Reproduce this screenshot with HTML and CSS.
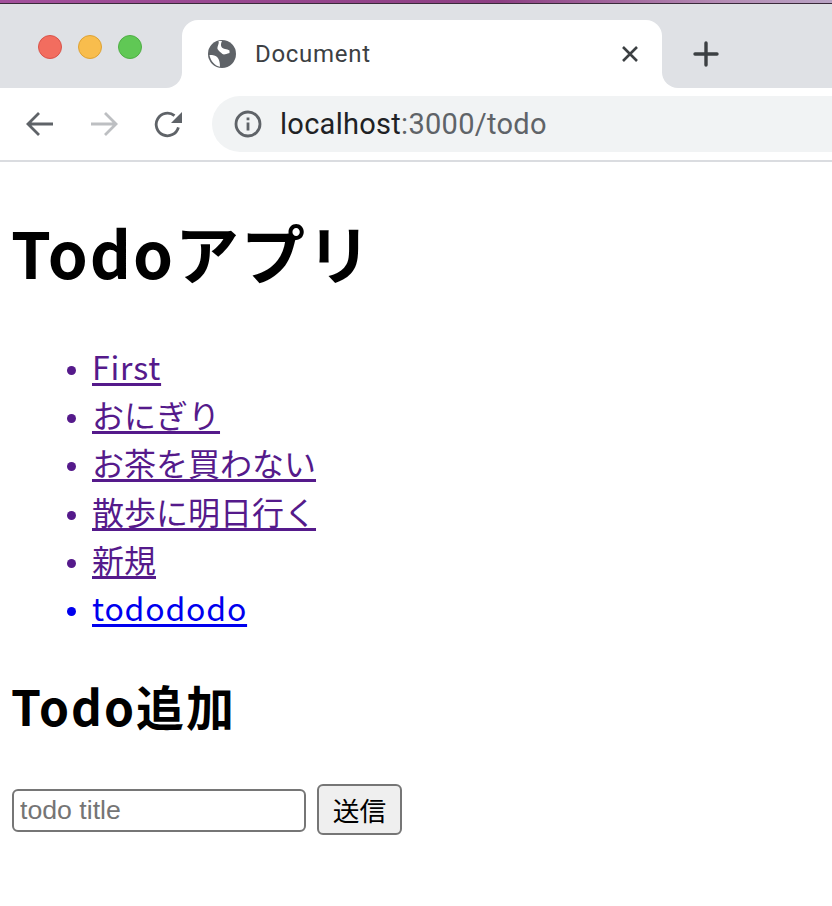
FILE: index.html
```html
<!DOCTYPE html>
<html lang="ja">
<head>
<meta charset="utf-8">
<title>Document</title>
<link rel="stylesheet" href="styles.css">
</head>
<body>
<div class="desktop-strip"></div>
<header class="chrome">
  <div class="tabstrip">
    <div class="strip-left">
      <span class="light red"></span><span class="light yellow"></span><span class="light green"></span>
    </div>
    <div class="tab">
      <svg class="globe" viewBox="0 0 28 28" width="28" height="28"><circle cx="14" cy="14" r="14" fill="#5f6368"/><path d="M10.500 1H14C13 3 12.500 5 13.500 7 15 9.500 19 8.500 21.500 10.500V13C18 14 16 15 14.500 14 12.500 12.500 11 11 9.500 9 9 6 11.500 4 10.500 1zM1.500 15C5 15 8 15.500 9.500 17.500 11 19.500 12 22 12 26.800 7 26 2.500 21 1.500 15z" fill="#fff"/></svg>
      <span class="tab-title">Document</span>
      <svg class="close" viewBox="0 0 18 18" width="18" height="18"><path d="M2 2l14 14M16 2L2 16" stroke="#3c4043" stroke-width="2.600" fill="none"/></svg>
    </div>
    <div class="strip-right">
      <svg viewBox="0 0 26 26" width="26" height="26"><path d="M13 2v22M2 13h22" stroke="#3c4043" stroke-width="3.400" stroke-linecap="round" fill="none"/></svg>
    </div>
  </div>
  <div class="toolbar">
    <svg class="nav" viewBox="0 0 28 26" width="28" height="26"><path d="M27 13H3M13 2L2 13l11 11" stroke="#5f6368" stroke-width="2.800" fill="none"/></svg>
    <svg class="nav" viewBox="0 0 28 26" width="28" height="26"><path d="M1 13h24M15 2l11 11-11 11" stroke="#bdbfc2" stroke-width="2.800" fill="none"/></svg>
    <svg class="nav" viewBox="0 0 28 28" width="28" height="28"><path d="M24.400 17.400A11.300 11.300 0 1 1 20.500 5.600" stroke="#5f6368" stroke-width="2.800" fill="none"/><path d="M28 2v11H17z" fill="#5f6368"/></svg>
    <div class="omnibox">
      <svg viewBox="0 0 28 28" width="28" height="28"><circle cx="14" cy="14" r="12" stroke="#5f6368" stroke-width="2.800" fill="none"/><path d="M12.600 7.500h2.800v2.800h-2.800zM12.600 12.500h2.800v8h-2.800z" fill="#5f6368"/></svg>
      <span class="url"><span class="host">localhost</span>:3000/todo</span>
    </div>
  </div>
</header>
<main class="page">
  <h1>Todoアプリ</h1>
  <ul>
    <li class="visited latin"><a href="#">First</a></li>
    <li class="visited"><a href="#">おにぎり</a></li>
    <li class="visited"><a href="#">お茶を買わない</a></li>
    <li class="visited"><a href="#">散歩に明日行く</a></li>
    <li class="visited"><a href="#">新規</a></li>
    <li class="fresh latin"><a href="#">todododo</a></li>
  </ul>
  <h2>Todo追加</h2>
  <form class="add-form">
    <input type="text" placeholder="todo title">
    <button type="button">送信</button>
  </form>
</main>
</body>
</html>
```

FILE: styles.css
```css
* { box-sizing: border-box; }
html, body { margin: 0; padding: 0; background: #fff; overflow: hidden; }
body { font-family: "Noto Sans CJK JP", "Liberation Sans", sans-serif; color: #000; }

.desktop-strip {
  height: 4px;
  background: linear-gradient(90deg, #a3509c, #8d3f83 60%, #b58cb5 87%, #b9a3c4);
  border-bottom: 1px solid #3a2a3a;
}
.chrome { background: #fff; border-bottom: 2px solid #dadce0; }
.tabstrip {
  display: flex;
  height: 84px;
  background: linear-gradient(#dfe1e5 50%, #fff 50%);
  font-family: Roboto, "Liberation Sans", sans-serif;
}
.strip-left {
  width: 182px;
  background: #dfe1e5;
  border-radius: 14px 0 16px 0;
  display: flex;
  align-items: flex-start;
  gap: 16px;
  padding: 31px 0 0 38px;
}
.light { width: 24px; height: 24px; border-radius: 50%; border: 1px solid; }
.red { background: #f26d5f; border-color: #d9534a; }
.yellow { background: #f8bd4d; border-color: #dea234; }
.green { background: #60c855; border-color: #4fae45; }

.tab {
  width: 480px;
  margin-top: 16px;
  background: #fff;
  border-radius: 16px 16px 0 0;
  display: flex;
  align-items: center;
  padding: 0 23px 0 26px;
}
.globe { flex: none; margin-top: -1px; }
.tab-title { margin-left: 19px; font-size: 24px; color: #3c4043; flex: 1; letter-spacing: .7px; }
.close { flex: none; }
.strip-right {
  flex: 1;
  background: #dfe1e5;
  border-radius: 0 0 0 16px;
  padding: 37px 0 0 31px;
  display: flex;
  align-items: flex-start;
}

.toolbar {
  height: 72px;
  display: flex;
  align-items: center;
  padding: 0 0 0 26px;
}
.nav { flex: none; margin-right: 36px; }
.toolbar .nav:nth-child(3) { margin-right: 30px; }
.omnibox {
  flex: 1;
  height: 56px;
  margin-top: -1px;
  background: #f1f3f4;
  border-radius: 28px 0 0 28px;
  display: flex;
  align-items: center;
  padding-left: 22px;
}
.url { margin-left: 18px; font-family: Roboto, "Liberation Sans", sans-serif; font-size: 29px; color: #5f6368; letter-spacing: .28px; }
.host { color: #202124; }

.page { padding: 0 12px; }
h1 { font-size: 64px; line-height: 74px; font-weight: 700; margin: 52px 0 0; letter-spacing: 2px; text-indent: -1px; }
ul { list-style: disc; margin: 54px 0 0; padding: 0 0 0 80px; font-size: 32px; line-height: 48.200px; }
li::marker { font-family: "Liberation Sans", sans-serif; font-size: 30px; }
li.visited, li.visited a { color: #551a8b; }
li.fresh, li.fresh a { color: #0000ee; }
li.latin a { letter-spacing: .8px; }
li a { text-decoration: underline; text-decoration-thickness: 3px; text-underline-offset: 3px; }
h2 { font-size: 48px; line-height: 56px; font-weight: 700; margin: 46px 0 0; letter-spacing: 2px; text-indent: -1px; }
.add-form { display: flex; align-items: center; gap: 11px; margin-top: 51px; }
input {
  width: 294px;
  height: 43px;
  margin-top: 1px;
  border: 2px solid #767676;
  border-radius: 6px;
  padding: 0 6px;
  font: 26.700px "Liberation Sans", sans-serif;
  background: #fff;
}
input::placeholder { color: #757575; opacity: 1; }
button {
  width: 85px;
  height: 51px;
  border: 2px solid #767676;
  border-radius: 6px;
  background: #efefef;
  font: 26.700px "Liberation Sans", "Noto Sans CJK JP", sans-serif;
  color: #000;
  padding: 0;
}
```
